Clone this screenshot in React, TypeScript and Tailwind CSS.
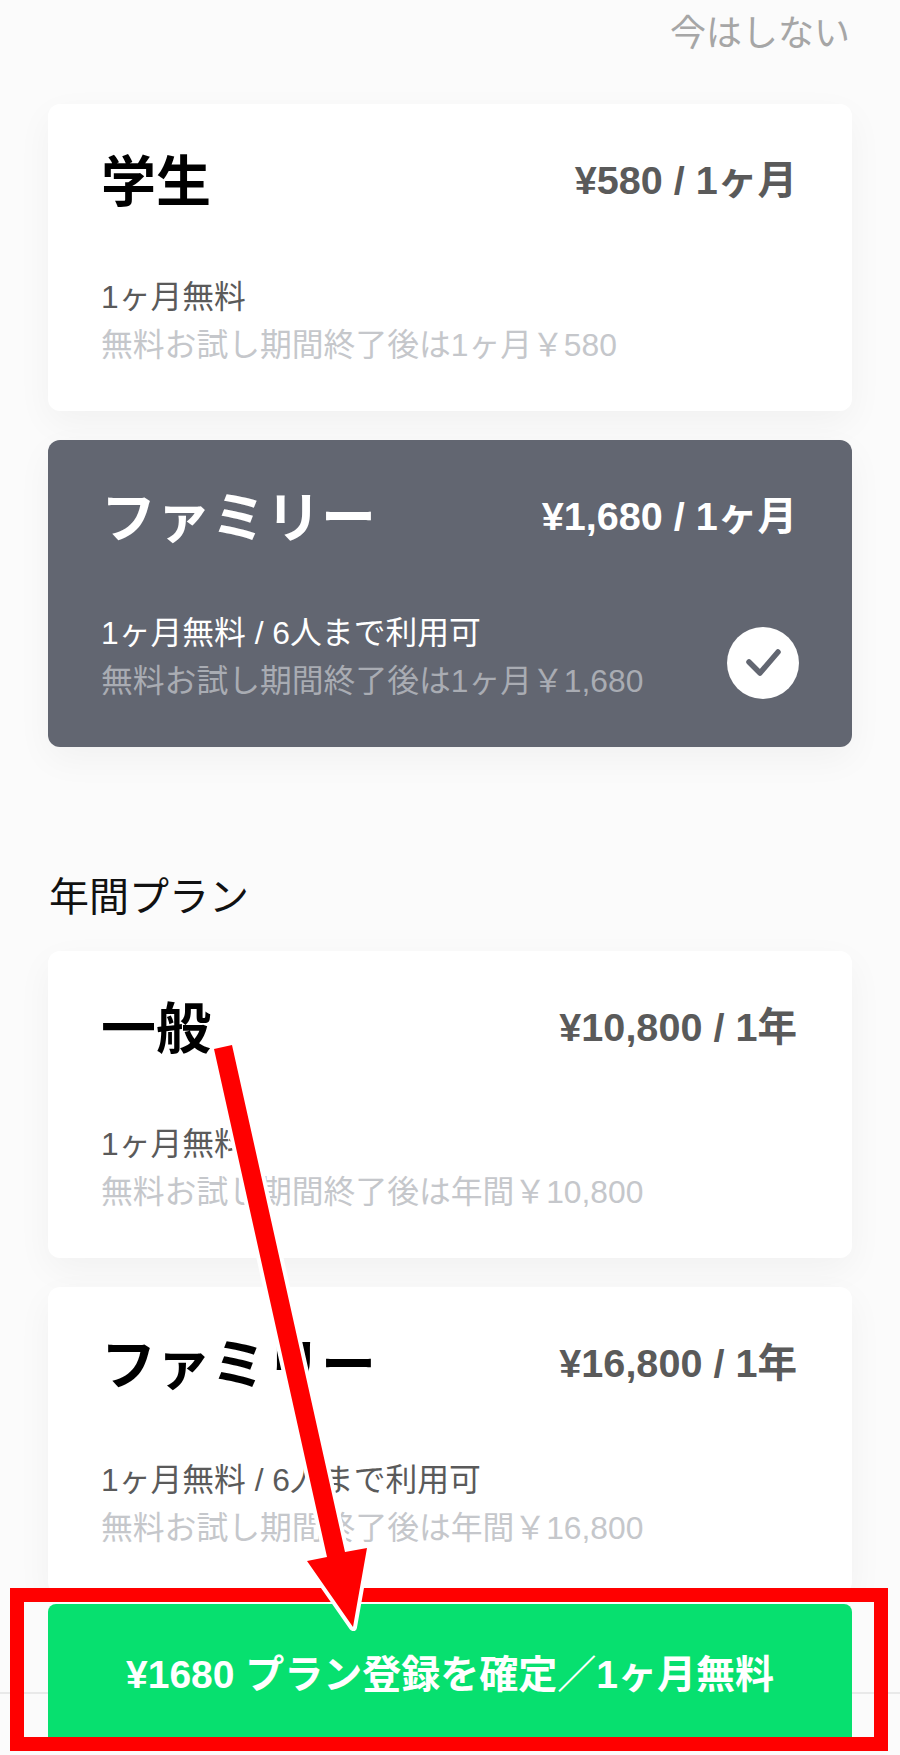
const plans = [
  { name: "学生", price: "¥580 / 1ヶ月", line1: "1ヶ月無料", line2: "無料お試し期間終了後は1ヶ月￥580", selected: false },
  { name: "ファミリー", price: "¥1,680 / 1ヶ月", line1: "1ヶ月無料 / 6人まで利用可", line2: "無料お試し期間終了後は1ヶ月￥1,680", selected: true },
];
const yearly = [
  { name: "一般", price: "¥10,800 / 1年", line1: "1ヶ月無料", line2: "無料お試し期間終了後は年間￥10,800", selected: false },
  { name: "ファミリー", price: "¥16,800 / 1年", line1: "1ヶ月無料 / 6人まで利用可", line2: "無料お試し期間終了後は年間￥16,800", selected: false },
];

type Plan = (typeof plans)[number];

function Card({ plan }: { plan: Plan }) {
  const s = plan.selected;
  return (
    <div
      className={
        s
          ? "relative h-[307px] rounded-[12px] bg-[#626671] pl-[53px] pr-[55px] pt-[48px] shadow-[0_12px_36px_rgba(0,0,0,0.045)]"
          : "relative h-[307px] rounded-[12px] bg-white pl-[53px] pr-[55px] pt-[48px] shadow-[0_12px_36px_rgba(0,0,0,0.045)]"
      }
    >
      <div className="flex h-[60px] items-start justify-between">
        <div className={s ? "text-[55px] leading-[60px] font-bold text-white" : "text-[55px] leading-[60px] font-bold text-black"}>{plan.name}</div>
        <div className={s ? "-mt-[2px] text-[39.6px] leading-[60px] font-bold text-white" : "-mt-[2px] text-[39.6px] leading-[60px] font-bold text-[#5a5a5a]"}>{plan.price}</div>
      </div>
      <div className={s ? "mt-[61px] text-[31.8px] leading-[48px] text-white" : "mt-[61px] text-[31.8px] leading-[48px] text-[#5a5a5a]"}>{plan.line1}</div>
      <div className={s ? "text-[31.8px] leading-[48px] text-[#a9acb3]" : "text-[31.8px] leading-[48px] text-[#c5c7cb]"}>{plan.line2}</div>
      {s && (
        <div className="absolute right-[53px] top-[187px] h-[72px] w-[72px] rounded-full bg-white">
          <svg viewBox="0 0 72 72" className="h-[72px] w-[72px]" fill="none" stroke="#626671" strokeWidth="5.5" strokeLinecap="round" strokeLinejoin="round">
            <path d="M22 35 L33 46 L51 25" />
          </svg>
        </div>
      )}
    </div>
  );
}

export default function App() {
  return (
    <div className="relative h-[1755px] w-[900px] overflow-hidden bg-[#fbfbfb] font-['Liberation_Sans','Noto_Sans_CJK_JP',sans-serif]">
      <div className="flex h-[104px] justify-end pr-[50px] pt-[12px]">
        <span className="text-[36px] leading-[44px] text-[#a6a6a6]">今はしない</span>
      </div>
      <div className="flex flex-col gap-[29px] px-[48px]">
        {plans.map((p) => (
          <Card key={p.price} plan={p} />
        ))}
      </div>
      <div className="h-[204px] px-[49px] pt-[122px] text-[40px] leading-[56px] text-[#111111]">年間プラン</div>
      <div className="flex flex-col gap-[29px] px-[48px]">
        {yearly.map((p) => (
          <Card key={p.price} plan={p} />
        ))}
      </div>

      <div className="absolute inset-x-0 bottom-0 h-[167px] bg-[#fbfbfb]">
        <div className="absolute inset-x-0 top-[104px] h-[2px] bg-[#e9e9e9]" />
        <div className="relative ml-[48px] mt-[16px] flex h-[141px] w-[804px] items-start justify-center rounded-[8px] bg-[#07e06f] pt-[47px] text-[39px] leading-[48px] font-bold text-white">
          ¥1680 プラン登録を確定／1ヶ月無料
        </div>
      </div>

      <div className="absolute left-[10px] top-[1588px] h-[163px] w-[878px] border-[14px] border-[#ff0000]" />

      <svg className="absolute left-0 top-0 h-[1755px] w-[900px]" viewBox="0 0 900 1755">
        <polygon
          points="214,1049 232,1045 345,1552 367,1548 353,1627 307,1561 327,1557"
          fill="#ff0000"
          stroke="#ffffff"
          strokeWidth="8"
          strokeLinejoin="round"
          paintOrder="stroke"
        />
      </svg>
    </div>
  );
}
